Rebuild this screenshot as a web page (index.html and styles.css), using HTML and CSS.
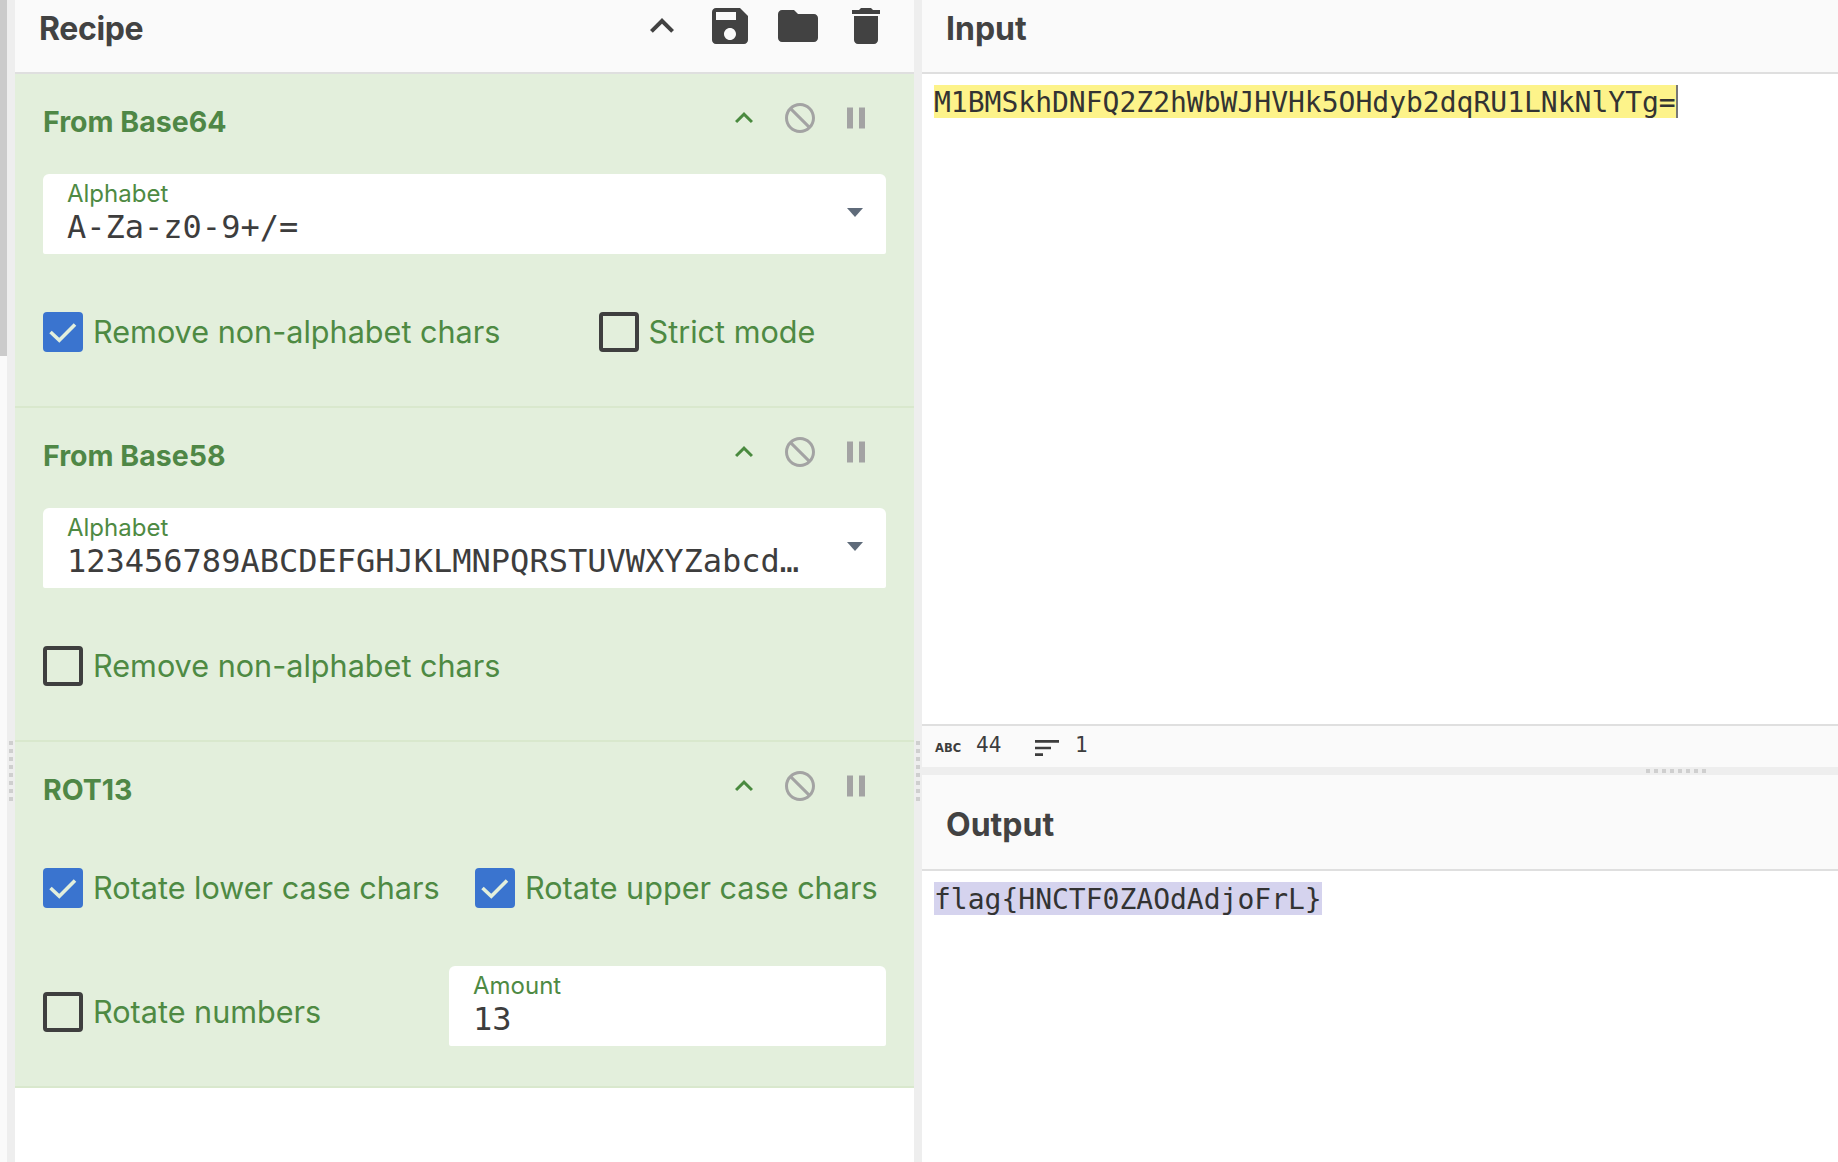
FILE: index.html
```html
<!DOCTYPE html>
<html lang="en">
<head>
<meta charset="utf-8">
<title>CyberChef</title>
<link rel="stylesheet" href="styles.css">
</head>
<body>
<div class="app">
  <div class="scroll"><div class="thumb"></div></div>
  <div class="gutter"><span class="grip"></span></div>
  <section class="recipe">
    <header class="head">
      <h2 class="head-title">Recipe</h2>
      <div class="head-icons">
        <svg class="ico48" viewBox="0 0 24 24"><path d="M12 8l-6 6 1.41 1.41L12 10.83l4.59 4.58L18 14z"/></svg>
        <svg class="ico48" viewBox="0 0 24 24"><path d="M17 3H5c-1.11 0-2 .9-2 2v14c0 1.1.89 2 2 2h14c1.1 0 2-.9 2-2V7l-4-4zm-5 16c-1.66 0-3-1.34-3-3s1.34-3 3-3 3 1.34 3 3-1.34 3-3 3zm3-10H5V5h10v4z"/></svg>
        <svg class="ico48" viewBox="0 0 24 24"><path d="M10 4H4c-1.1 0-1.99.9-1.99 2L2 18c0 1.1.9 2 2 2h16c1.1 0 2-.9 2-2V8c0-1.1-.9-2-2-2h-8l-2-2z"/></svg>
        <svg class="ico48" viewBox="0 0 24 24"><path d="M6 19c0 1.1.9 2 2 2h8c1.1 0 2-.9 2-2V7H6v12zM19 4h-3.5l-1-1h-5l-1 1H5v2h14V4z"/></svg>
      </div>
    </header>

    <article class="op">
      <div class="op-head">
        <h3 class="op-title">From Base64</h3>
        <div class="op-icons">
          <svg class="ico36 green" viewBox="0 0 24 24"><path d="M12 8l-6 6 1.41 1.41L12 10.83l4.59 4.58L18 14z"/></svg>
          <svg class="ico36 grey flip" viewBox="0 0 24 24"><path d="M12 2C6.48 2 2 6.48 2 12s4.48 10 10 10 10-4.48 10-10S17.52 2 12 2zM4 12c0-4.42 3.58-8 8-8 1.85 0 3.55.63 4.9 1.69L5.69 16.9C4.63 15.55 4 13.85 4 12zm8 8c-1.85 0-3.55-.63-4.9-1.69L18.31 7.1C19.37 8.45 20 10.15 20 12c0 4.42-3.58 8-8 8z"/></svg>
          <svg class="ico36 grey" viewBox="0 0 24 24"><path d="M6 19h4V5H6v14zm8-14v14h4V5h-4z"/></svg>
        </div>
      </div>
      <div class="field">
        <div class="field-label">Alphabet</div>
        <div class="field-value">A-Za-z0-9+/=</div>
        <span class="caret"></span>
      </div>
      <div class="row row-strict">
        <label class="check"><span class="box on"><svg viewBox="0 0 40 40"><path d="M7.500 20l8.800 8.200L32 12.500"/></svg></span>Remove non-alphabet chars</label>
        <label class="check"><span class="box"></span>Strict mode</label>
      </div>
    </article>

    <article class="op">
      <div class="op-head">
        <h3 class="op-title">From Base58</h3>
        <div class="op-icons">
          <svg class="ico36 green" viewBox="0 0 24 24"><path d="M12 8l-6 6 1.41 1.41L12 10.83l4.59 4.58L18 14z"/></svg>
          <svg class="ico36 grey flip" viewBox="0 0 24 24"><path d="M12 2C6.48 2 2 6.48 2 12s4.48 10 10 10 10-4.48 10-10S17.52 2 12 2zM4 12c0-4.42 3.58-8 8-8 1.85 0 3.55.63 4.9 1.69L5.69 16.9C4.63 15.55 4 13.85 4 12zm8 8c-1.85 0-3.55-.63-4.9-1.69L18.31 7.1C19.37 8.45 20 10.15 20 12c0 4.42-3.58 8-8 8z"/></svg>
          <svg class="ico36 grey" viewBox="0 0 24 24"><path d="M6 19h4V5H6v14zm8-14v14h4V5h-4z"/></svg>
        </div>
      </div>
      <div class="field">
        <div class="field-label">Alphabet</div>
        <div class="field-value">123456789ABCDEFGHJKLMNPQRSTUVWXYZabcd…</div>
        <span class="caret"></span>
      </div>
      <div class="row">
        <label class="check"><span class="box"></span>Remove non-alphabet chars</label>
      </div>
    </article>

    <article class="op op-last">
      <div class="op-head">
        <h3 class="op-title">ROT13</h3>
        <div class="op-icons">
          <svg class="ico36 green" viewBox="0 0 24 24"><path d="M12 8l-6 6 1.41 1.41L12 10.83l4.59 4.58L18 14z"/></svg>
          <svg class="ico36 grey flip" viewBox="0 0 24 24"><path d="M12 2C6.48 2 2 6.48 2 12s4.48 10 10 10 10-4.48 10-10S17.52 2 12 2zM4 12c0-4.42 3.58-8 8-8 1.85 0 3.55.63 4.9 1.69L5.69 16.9C4.63 15.55 4 13.85 4 12zm8 8c-1.85 0-3.55-.63-4.9-1.69L18.31 7.1C19.37 8.45 20 10.15 20 12c0 4.42-3.58 8-8 8z"/></svg>
          <svg class="ico36 grey" viewBox="0 0 24 24"><path d="M6 19h4V5H6v14zm8-14v14h4V5h-4z"/></svg>
        </div>
      </div>
      <div class="row row-rot">
        <label class="check"><span class="box on"><svg viewBox="0 0 40 40"><path d="M7.500 20l8.800 8.200L32 12.500"/></svg></span>Rotate lower case chars</label>
        <label class="check"><span class="box on"><svg viewBox="0 0 40 40"><path d="M7.500 20l8.800 8.200L32 12.500"/></svg></span>Rotate upper case chars</label>
      </div>
      <div class="row row-amount">
        <label class="check check-low"><span class="box"></span>Rotate numbers</label>
        <div class="field field-num">
          <div class="field-label">Amount</div>
          <div class="field-value num">13</div>
        </div>
      </div>
    </article>
  </section>

  <div class="gutter"><span class="grip"></span></div>

  <main class="io">
    <header class="head">
      <h2 class="head-title">Input</h2>
    </header>
    <div class="pane pane-in">
      <div class="code"><span class="hl-in">M1BMSkhDNFQ2Z2hWbWJHVHk5OHdyb2dqRU1LNkNlYTg=</span><span class="cursor"></span></div>
    </div>
    <div class="status">
      <span class="abc">ABC</span>
      <span class="stat stat-len">44</span>
      <svg class="ico32" viewBox="0 0 24 24"><path d="M3 18h6v-2H3v2zM3 6v2h18V6H3zm0 7h12v-2H3v2z"/></svg>
      <span class="stat stat-lines">1</span>
    </div>
    <div class="hgutter"><span class="hgrip"></span></div>
    <header class="head head-out">
      <h2 class="head-title">Output</h2>
    </header>
    <div class="pane">
      <div class="code"><span class="hl-out">flag{HNCTF0ZAOdAdjoFrL}</span></div>
    </div>
  </main>
</div>
</body>
</html>
```
FILE: styles.css
```css
* { box-sizing: border-box; }
html, body { margin: 0; height: 100%; overflow: hidden; background: #fff; }
.app { display: flex; height: 1162px; width: 1838px; color: #3d3d3d; font-family: Inter, sans-serif; }

.scroll { width: 7px; background: #fafafa; flex: none; }
.thumb { height: 356px; background: #cbcbcb; }
.gutter { width: 8px; flex: none; background: #eeeeee; position: relative; }
.grip { position: absolute; left: 2px; top: 741px; width: 4px; height: 60px; background: repeating-linear-gradient(to bottom, #cfcfcf 0 4px, transparent 4px 8px); }

.recipe { width: 899px; flex: none; background: #fff; }
.recipe .head-title { letter-spacing: -0.35px; }
.head { height: 74px; background: #fafafa; border-bottom: 2px solid #dfdfdf; padding: 14px 24px 0; display: flex; justify-content: space-between; position: relative; }
.head-title { margin: 0; font: 700 32px/30px Inter, sans-serif; color: #424242; }
.head-icons { display: flex; gap: 20px; margin-top: -12px; height: 48px; }
.ico48 { width: 48px; height: 48px; fill: #424242; }
.ico36 { width: 36px; height: 36px; }
.ico32 { width: 32px; height: 32px; fill: #3d3d3d; flex: none; margin: 3px 0 0 29px; }
.green { fill: #4a8a3f; }
.grey { fill: #a3a3a3; }
.flip { transform: scaleX(-1); }

.op { height: 334px; background: #e3efdc; border-bottom: 2px solid #d9e8cd; padding: 26px 28px 0; color: #4e8a43; }
.op-last { height: 346px; }
.op-head { display: flex; justify-content: space-between; height: 74px; }
.op-title { margin: 0; font: 700 28.5px/44px Inter, sans-serif; color: #4f8746; }
.op-icons { display: flex; gap: 20px; height: 36px; margin-right: 12px; }

.field { height: 80px; background: #fff; border-radius: 6px 6px 2px 2px; padding: 6px 24px 0; position: relative; }
.field-label { font: 400 24px/28px Inter, sans-serif; color: #4e8a43; }
.field-value { font: 400 32px/38px "DejaVu Sans Mono", monospace; color: #3d3d3d; white-space: nowrap; }
.field-num { flex: 1; }
.caret { position: absolute; left: 804px; top: 34px; border-left: 8px solid transparent; border-right: 8px solid transparent; border-top: 9px solid #5f6b7a; }

.row { display: grid; margin-top: 58px; font: 400 30.6px/40px Inter, sans-serif; }
.row-strict { grid-template-columns: 555.5px 1fr; }
.row-rot { grid-template-columns: 432px 1fr; margin-top: 26px; }
.row-amount { grid-template-columns: 406px 1fr; align-items: end; margin-top: 58px; }
.check { display: flex; gap: 10px; align-items: center; white-space: nowrap; color: #4e8a43; height: 40px; }
.check-low { margin-bottom: 14px; }
.box { width: 40px; height: 40px; flex: none; border: 4px solid #3f3f3f; border-radius: 4px; }
.box.on { background: #3a74cf; border: 0; }
.box svg { display: block; width: 40px; height: 40px; fill: none; stroke: #e3efdc; stroke-width: 3.6; }

.io { flex: 1; display: flex; flex-direction: column; background: #fff; min-width: 0; }
.io > .head { flex: none; }
.head-out { height: 96px; padding-top: 35px; }
.pane { flex: 1; padding: 11px 12px 0; min-height: 0; }
.pane-in { flex: none; height: 652px; border-bottom: 2px solid #dfdfdf; }
.code { font: 400 28px/35px "DejaVu Sans Mono", monospace; color: #333; white-space: nowrap; display: flex; height: 33px; }
.hl-in { background: #fdf38a; }
.hl-out { background: #d5d3ee; }
.cursor { width: 2px; background: #777; }
.status { height: 41px; background: #fafafa; display: flex; align-items: center; padding-left: 13px; flex: none; }
.abc { font: 700 11.5px/1 "DejaVu Sans", sans-serif; width: 28px; flex: none; margin-top: 4px; }
.stat { font: 400 21px/1 "DejaVu Sans Mono", monospace; margin: -2px 0 0 13px; color: #3d3d3d; }
.stat-len { width: 26px; }
.stat-lines { margin-left: 12px; }
.hgutter { height: 8px; background: #eeeeee; flex: none; position: relative; }
.hgrip { position: absolute; left: 724px; top: 2px; width: 60px; height: 4px; background: repeating-linear-gradient(to right, #cfcfcf 0 4px, transparent 4px 8px); }
```
